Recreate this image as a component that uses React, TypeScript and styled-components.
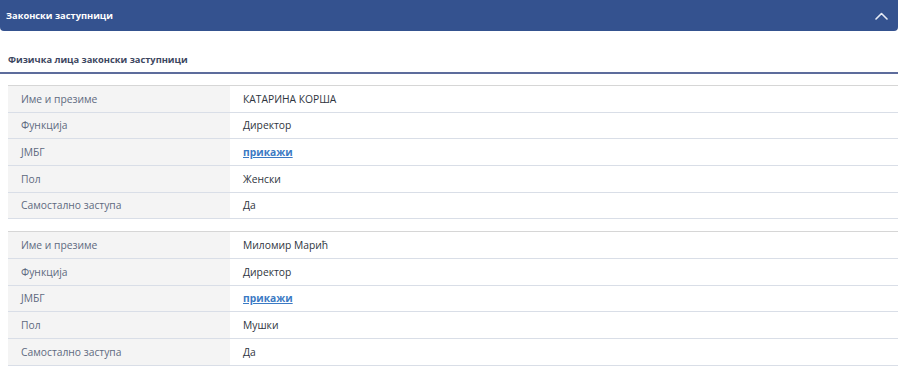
import React from "react";
import styled, { createGlobalStyle } from "styled-components";

const GlobalStyle = createGlobalStyle`
  body {
    margin: 0;
    background: #ffffff;
    font-family: "Open Sans", "Noto Sans", "Liberation Sans", sans-serif;
  }
`;

const Panel = styled.section`
  width: 898px;
`;

const PanelHeader = styled.div`
  display: flex;
  align-items: center;
  justify-content: space-between;
  height: 31px;
  padding: 0 10px 0 6px;
  background: #34528f;
  border-radius: 0 0 4px 4px;
  color: #ffffff;
`;

const PanelTitle = styled.h2`
  margin: 0;
  font-size: 9.3px;
  font-weight: 700;
`;

const SectionTitle = styled.h3`
  margin: 21px 0 0;
  padding: 0 0 4px 8px;
  height: 16px;
  line-height: 16px;
  font-size: 9.3px;
  font-weight: 700;
  color: #3c4660;
  border-bottom: 2px solid #5d6c9c;
`;

const Tables = styled.div`
  display: flex;
  flex-direction: column;
  gap: 12px;
  margin: 11px 0 0 8px;
`;

const Table = styled.div`
  border-top: 1px solid #d6d6d6;
`;

const Row = styled.div`
  display: grid;
  grid-template-columns: 222px 1fr;
  height: 26.67px;
  box-sizing: border-box;
  border-bottom: 1px solid #d9dee7;
`;

const Label = styled.div`
  display: flex;
  align-items: center;
  padding-left: 13px;
  background: #f4f4f4;
  font-size: 10.3px;
  color: #5e6a80;
`;

const Value = styled.div`
  display: flex;
  align-items: center;
  padding-left: 13px;
  font-size: 10.3px;
  color: #2f3540;
`;

const ShowLink = styled.a`
  font-weight: 700;
  color: #3b7ac4;
  text-decoration: underline;
  cursor: pointer;
`;

type Person = {
  name: string;
  role: string;
  gender: string;
  alone: string;
};

const people: Person[] = [
  { name: "КАТАРИНА КОРША", role: "Директор", gender: "Женски", alone: "Да" },
  { name: "Миломир Марић", role: "Директор", gender: "Мушки", alone: "Да" },
];

function Chevron() {
  return (
    <svg width="13" height="8" viewBox="0 0 13 8" fill="none">
      <path d="M1 7L6.5 1.5L12 7" stroke="#e6ebf5" strokeWidth="1.6" strokeLinecap="round" strokeLinejoin="round" />
    </svg>
  );
}

export default function App() {
  return (
    <>
      <GlobalStyle />
      <Panel>
        <PanelHeader>
          <PanelTitle>Законски заступници</PanelTitle>
          <Chevron />
        </PanelHeader>
        <SectionTitle>Физичка лица законски заступници</SectionTitle>
        <Tables>
          {people.map((p) => (
            <Table key={p.name}>
              <Row>
                <Label>Име и презиме</Label>
                <Value>{p.name}</Value>
              </Row>
              <Row>
                <Label>Функција</Label>
                <Value>{p.role}</Value>
              </Row>
              <Row>
                <Label>ЈМБГ</Label>
                <Value>
                  <ShowLink>прикажи</ShowLink>
                </Value>
              </Row>
              <Row>
                <Label>Пол</Label>
                <Value>{p.gender}</Value>
              </Row>
              <Row>
                <Label>Самостално заступа</Label>
                <Value>{p.alone}</Value>
              </Row>
            </Table>
          ))}
        </Tables>
      </Panel>
    </>
  );
}
